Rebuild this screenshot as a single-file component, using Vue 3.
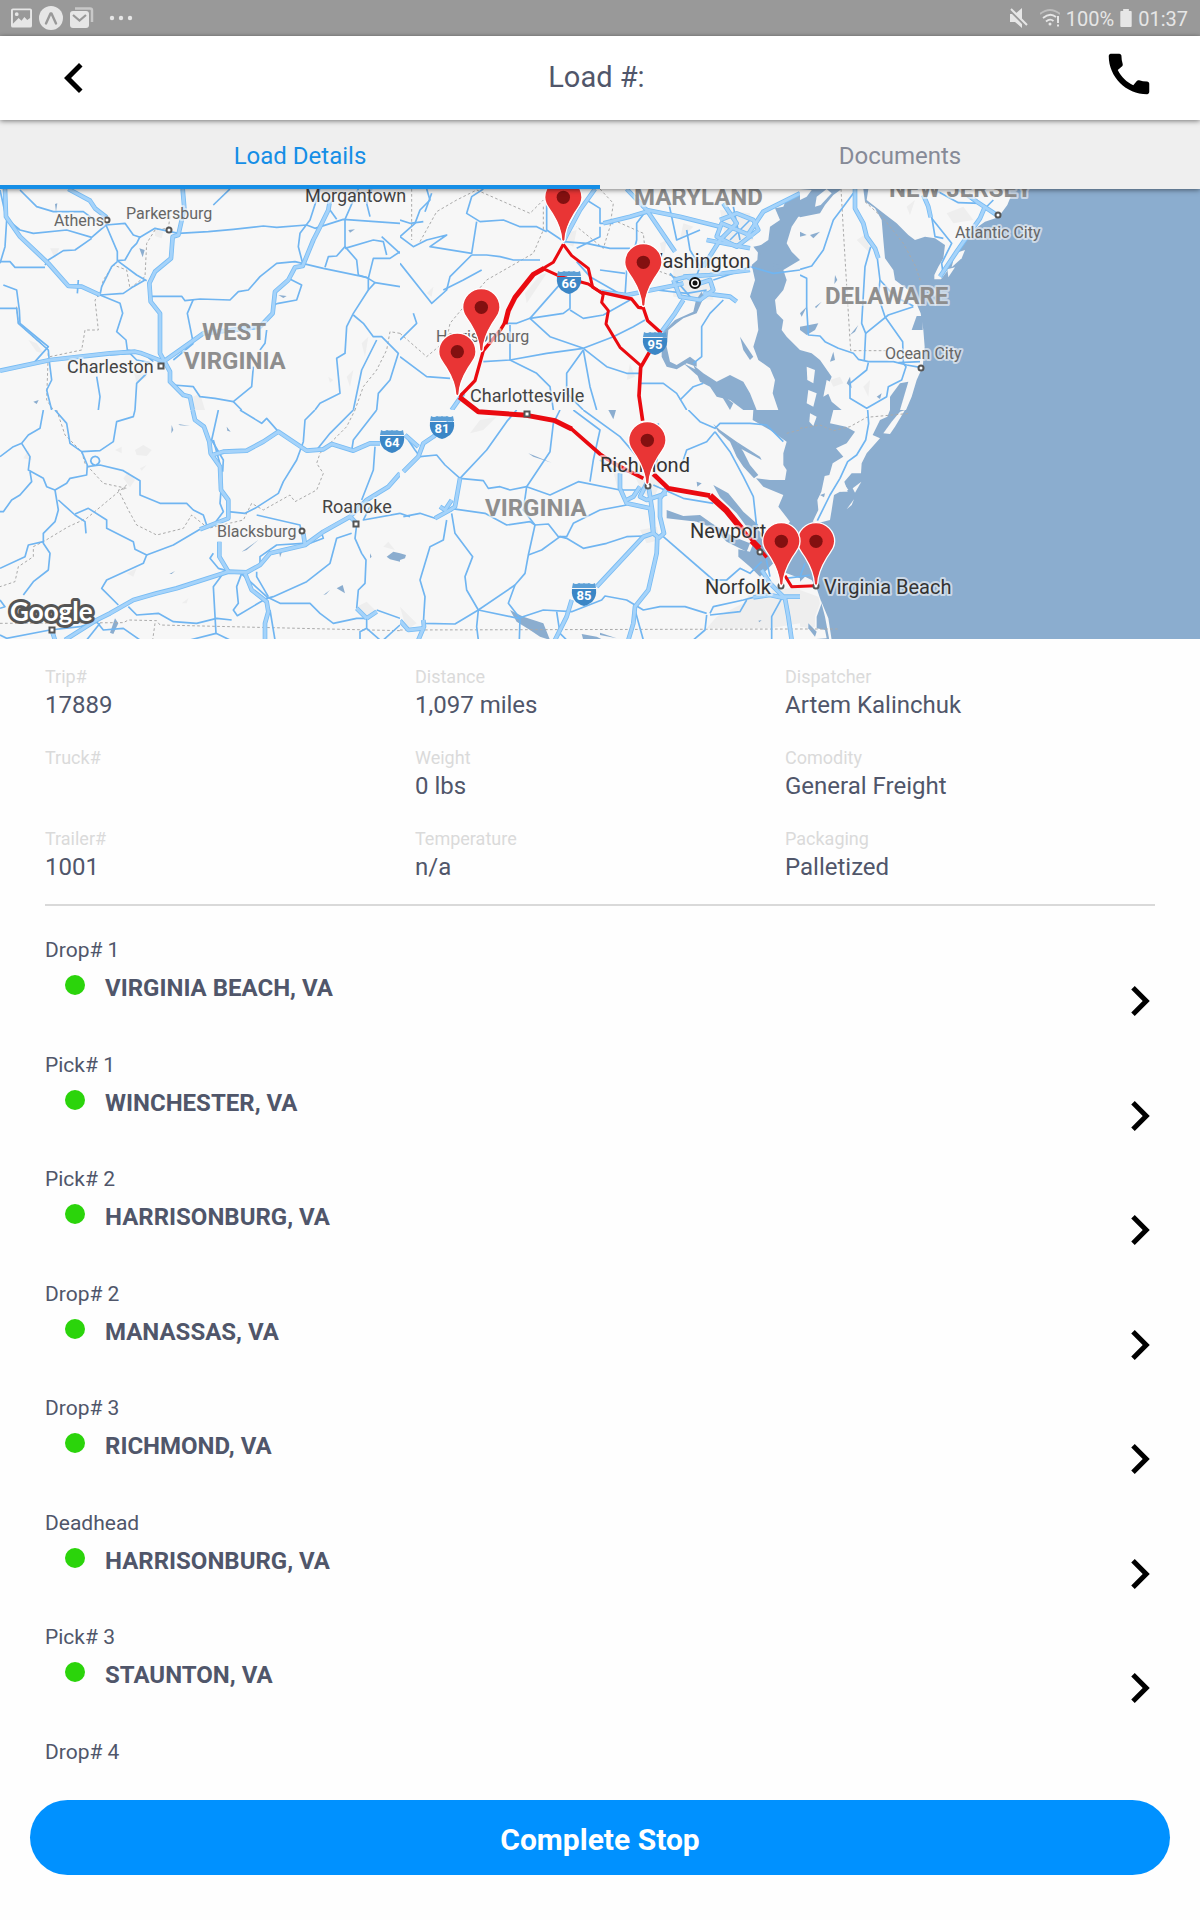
<script setup>
import { ref } from 'vue'

const tabs = ['Load Details', 'Documents']
const activeTab = ref('Load Details')

const details = [
  { label: 'Trip#', value: '17889' },
  { label: 'Distance', value: '1,097 miles' },
  { label: 'Dispatcher', value: 'Artem Kalinchuk' },
  { label: 'Truck#', value: '' },
  { label: 'Weight', value: '0 lbs' },
  { label: 'Comodity', value: 'General Freight' },
  { label: 'Trailer#', value: '1001' },
  { label: 'Temperature', value: 'n/a' },
  { label: 'Packaging', value: 'Palletized' },
]

const stops = [
  { label: 'Drop# 1', city: 'VIRGINIA BEACH, VA' },
  { label: 'Pick# 1', city: 'WINCHESTER, VA' },
  { label: 'Pick# 2', city: 'HARRISONBURG, VA' },
  { label: 'Drop# 2', city: 'MANASSAS, VA' },
  { label: 'Drop# 3', city: 'RICHMOND, VA' },
  { label: 'Deadhead', city: 'HARRISONBURG, VA' },
  { label: 'Pick# 3', city: 'STAUNTON, VA' },
  { label: 'Drop# 4', city: '' },
]

// Map tiles: each one holds its shapes in its own coordinates.
const tiles = [
  {
    x: 0, y: -27, sea: false,
    land: [],
    urban: ['465,150 490,155 485,175 465,168', '85,480 110,490 130,520 110,515', '400,570 430,560 440,590 410,610', '580,650 600,640 615,690 580,690', '1085,490 1105,470 1095,530', '150,205 178,205 165,235', '1040,590 1060,570 1050,620', '985,590 1000,600 990,608'],
    water: ['418,205 434,210 428,232', '835,345 860,348 850,354', '1045,150 1065,148 1050,158', '100,665 116,660 110,672', '165,72 172,70 168,95'],
    major: [
      'M15,27 L18,110 60,170 145,250 205,318 245,320 300,345',
      'M205,27 L270,62 285,85 320,112',
      'M548,27 L553,85 535,165 518,170 513,235 465,275 448,310 452,365 480,400 480,520 510,575 510,605 550,645 570,650 578,690',
      'M990,60 L985,90 958,145 940,180 908,258 885,262 865,300 825,335 818,400 780,440 610,460 540,510 490,545 425,520 405,515 330,520 150,540 0,572',
    ],
    minor: [
      'M0,30 L20,120 15,200 0,250', 'M18,115 L60,150 100,160 200,150 275,172 318,135 375,130 400,165 420,172 465,145 535,160 625,155 700,148 790,138 830,142 920,135 945,145 1030,118 1200,130',
      'M135,262 L45,262 30,245 0,245', 'M135,255 L145,240 190,212 225,210 275,175', 'M318,135 L352,215 352,242 410,285 440,302', 'M352,242 L375,240 395,205 410,190 420,170',
      'M352,245 L335,260 305,320 300,345 370,340 400,320 435,300', 'M300,345 L360,370 368,400 350,455 378,480 382,510 430,520 460,545',
      'M455,349 L545,349 555,362 600,357 690,360 715,335 745,330 780,290 830,250 885,245 970,265 1100,292 1125,308 1200,320',
      'M580,358 L562,400 570,440 580,490', 'M0,385 L50,385 55,430 100,470 145,510 148,545 155,600 140,630 155,690', 'M10,315 L50,330 58,390 60,430 120,480 145,500 105,545',
      'M60,30 L110,80 160,95 250,95 290,125', 'M690,27 L640,75', 'M960,27 L930,120 900,160 895,200 910,258', 'M990,90 L1010,118', 'M1075,27 L1035,118 1035,200 1070,240 1075,285 1105,295',
      'M1035,200 L1010,228 985,230 975,262', 'M1035,205 L1120,180 1150,185 1160,225', 'M1200,215 L1170,235 1120,235 1105,295 1105,330 1060,400 1040,440 1035,520 1010,535 1020,640 960,670 945,690', 'M1060,405 L1090,430 1120,470 1145,470 1195,520 1170,600 1135,640 1130,690', 'M865,295 L905,315 890,360 835,370 820,375', 'M800,450 L795,490 780,510', 'M760,560 L755,620 700,665 645,655 600,650 580,620 520,615', 'M700,665 L725,690', 'M290,590 L300,650 295,690', 'M440,580 L410,610 405,690', 'M450,548 L410,540 390,520 330,525',
      'M1115,27 L1100,70 1110,110', 'M1200,220 L1145,170', 'M1105,330 L1125,308', 'M235,300 L232,340', 'M520,540 L580,490', 'M1130,480 L1085,570 1060,690',
    ],
    border: ['M690,27 L640,75', 'M510,110 L505,145 465,150 440,190 435,290 390,325 380,270 340,255 310,300 300,340 285,360 295,450 255,450 245,510 150,530', 'M1200,460 L1170,455 1160,510 1130,570 1090,620 1065,690', 'M50,380 L55,430 110,480 145,510 140,660 160,690'],
  },
  {
    x: 1200, y: -27, sea: false,
    land: [],
    urban: ['500,160 530,150 520,200 495,190', '960,90 1050,100 1060,180 980,200', '820,260 940,260 940,360 820,350', '850,130 880,140 840,180', '780,190 800,180 790,240', '420,285 440,280 380,370 375,340', '690,550 705,590 680,600', '80,340 100,320 95,350'],
    water: [
      '1200,45 1160,55 1150,80 1125,85 1140,120 1110,140 1105,180 1075,200 1072,240 1055,255 1065,300 1050,350 1070,390 1075,450 1060,500 1075,540 1110,565 1125,600 1118,640 1135,690 1200,690 1200,510 1160,470 1145,450 1150,420 1130,400 1125,360 1150,330 1160,300 1150,270 1200,240 1175,215 1160,190 1175,140 1195,110 1200,110',
      '905,335 912,350 890,400 850,415 830,430 805,450 800,500 810,545 830,555 870,530 890,545 890,560 860,550 830,568 800,560 785,530 785,500 790,455 825,420 880,395 888,360',
      '880,555 910,580 950,605 990,585 1030,605 1050,640 1070,690 1030,690 990,660 950,650 930,620 900,605', '850,550 890,570 920,600 890,585', '1020,470 1040,500 1060,530 1050,540 1030,510', '960,640 1000,670 990,690', '1060,200 1110,190 1080,225', '1120,250 1155,260 1120,270',
    ],
    major: [
      'M585,27 L540,90 500,165 490,185', 'M680,27 L740,90 825,215', 'M740,95 L690,110 610,130', 'M600,335 L680,345 830,315 850,310', 'M820,300 L860,290 900,310 930,300 940,330 900,360 840,350 820,300', 'M785,455 L825,400 850,360', 'M740,90 L840,110 960,140', 'M960,120 L1010,100 1060,120 1075,150 1010,200 950,170 965,130 1060,170', 'M1200,40 L1090,95 1040,170', 'M910,260 L960,180 1010,130 970,70', 'M920,180 L1050,205', 'M155,690 L190,640', 'M910,340 L990,350 1010,365', 'M850,290 L930,285 1050,270',
    ],
    minor: [
      'M80,27 L90,60 60,90 45,130 0,170', 'M95,40 L75,95', 'M250,27 L215,50 200,100 240,125 310,120 360,140 410,140 440,155', 'M0,120 L30,130 70,125', 'M230,125 L215,220 90,200 140,165 80,180 40,200 0,170', 'M215,225 L260,225 300,230 340,240 420,240', 'M215,225 L150,290 140,330 95,370 0,250',
      'M440,40 L440,150 485,180', 'M490,185 L560,190 630,205 690,205', 'M600,140 L600,170 530,205', 'M640,130 L600,130 600,85 560,60', 'M740,90 L710,130 710,180 690,260', 'M680,270 L675,350 570,290 530,245', 'M600,270 L675,280',
      'M510,340 L510,385 490,400 390,415 350,430 310,430', 'M390,415 L500,290', 'M510,390 L550,415 610,405 690,360', 'M390,415 L450,470 550,505 640,470 700,440 735,420', 'M550,505 L440,520 330,540 250,545', 'M550,510 L500,580 500,640 550,690', 'M550,510 L570,620 590,690', 'M550,505 L620,560 680,580 720,580', 'M330,435 L330,540 410,580 450,620 460,690',
      'M720,610 L790,610 830,640 860,690', 'M840,660 L880,620 910,610', 'M970,360 L930,400 905,440 905,530 880,550', 'M1200,270 L1120,280 1050,260 1000,280 940,300', 'M40,400 L50,430 0,480', 'M0,530 L80,590 150,595', 'M860,150 L870,210 900,260 885,300', 'M800,40 L830,180 900,150', 'M1000,80 L1020,180', 'M1050,120 L990,180', 'M245,270 L190,300 130,330', 'M770,330 L860,340 920,330', 'M810,280 L870,350',
    ],
    border: ['M35,27 L35,180', 'M60,185 L110,95 170,60 230,30 390,100 430,60', 'M430,80 L430,150 400,220 330,260 260,300 200,370 150,430 140,480 80,530 0,460', 'M600,27 L640,70 630,140 610,205 530,140', 'M640,120 L730,160 740,260 850,300'],
  },
  {
    x: 2400, y: -27, sea: true,
    land: [
      '0,112 60,100 75,75 100,45 125,27 190,27 195,65 225,85 245,120 250,180 255,235 280,270 285,300 325,330 330,350 350,372 362,400 370,450 374,500 368,560 350,600 335,650 318,690 125,690 95,665 80,630 95,590 60,540 35,520 0,510',
      '205,27 200,60 245,95 290,130 325,165 345,180 375,170 405,175 435,195 430,235 415,260 403,285 403,298 423,298 440,275 455,240 490,190 520,150 555,125 595,112 622,75 632,50 612,27',
      '0,27 35,30 20,50 0,60', '80,27 50,50 45,80 62,75 95,40', '465,220 495,210 485,235 455,262', '442,268 465,262 445,292', '25,630 50,640 40,680 20,670', '20,560 45,570 40,610 22,600', '80,600 120,620 70,650',
    ],
    urban: ['440,100 490,80 520,120 460,130', '170,180 200,160 210,220', '320,80 345,60 330,105', '190,620 210,600 205,650', '90,600 120,590 130,610 100,620'],
    water: ['350,408 368,408 368,450 335,450', '0,400 20,380 5,410', '0,440 55,430 45,450 20,465 0,450', '105,285 112,300 103,312', '45,380 65,365 48,385', '150,465 175,435 165,455', '100,515 105,540 90,545', '150,590 155,625 140,610', '270,650 300,610 325,605 300,690 270,690', '230,650 245,640 240,657', '0,155 20,165 0,170', '30,165 60,155 40,175'],
    major: ['M165,27 L165,85 190,130 200,170 225,205 235,235', 'M370,45 L385,80 392,112', 'M595,108 L530,65 505,45', 'M420,290 L470,215 540,115 555,80'],
    minor: ['M160,40 L130,80 100,120 70,210 35,258 0,268', 'M0,285 L20,295 20,380 25,465 60,468 75,485 115,505 160,520 175,538 205,545 280,545 320,555 360,562', 'M212,200 L195,260 185,430 197,460 193,540', 'M232,235 L240,300 235,350 255,410 308,485 310,550 318,560 305,600 265,620 260,650 200,685 150,655 150,610 200,570 205,548', 'M197,460 L265,405 340,380', 'M240,300 L285,350 340,378', 'M295,548 L360,545', 'M415,35 L475,68 540,70 580,95', 'M395,110 L405,170 430,175', 'M395,115 L455,190 425,250 430,285', 'M550,90 L580,60', 'M470,27 L530,70'],
    border: ['M123,27 L130,150 145,400 152,512 260,512', 'M195,65 L250,115 310,190 345,255 362,305'],
  },
  {
    x: 0, y: 663, sea: false,
    land: [],
    urban: ['405,120 430,105 455,120 440,138 410,135', '370,205 385,185 405,210 390,232', '345,120 365,110 365,130', '1070,590 1100,575 1125,600 1095,625', '1150,410 1165,395 1185,420', '380,490 410,475 400,500', '545,580 565,565 560,580', '420,175 440,165 425,182', '70,145 85,120 95,150'],
    water: ['535,42 570,48 540,46', '515,45 520,60 514,70', '680,50 692,65 682,62', '725,425 775,390 740,420', '1160,440 1180,425 1200,430 1200,455 1170,448', '1110,430 1115,440 1110,445', '970,555 990,540 978,553', '1010,535 1028,525 1035,550', '508,492 525,483 515,492', '838,428 846,426 840,442', '345,625 355,640 340,672 330,668'],
    major: [
      'M578,0 L585,30 612,50 628,95 632,130 660,170 663,240 685,270 685,325 600,358', 'M638,135 L670,125 740,122 790,95 835,65 920,122 970,118 995,102 1060,122 1110,100 1140,100', 'M1200,190 L1165,230 1100,270 1050,320 970,365 915,405 810,430 780,465 740,487 685,485 530,535 470,550 400,570 330,610 290,630 195,690', 'M658,395 L658,440 685,485', 'M735,490 L755,540 800,575 805,605 795,640 795,690', 'M155,660 L165,690', 'M910,370 L915,405', 'M1050,320 L1070,340', 'M1100,625 L1070,595 M1100,625 L1130,605',
    ],
    minor: [
      'M130,0 L120,55 85,75 65,100 40,110 0,140', 'M65,100 L90,140 85,180 130,205 140,230 165,240 200,220 210,205 260,195 262,165 245,125 210,100 200,40 165,0', 'M245,125 L300,122 340,95 350,35 400,20 405,0', 'M262,170 L300,165 370,182 420,212 420,255 480,280 560,280 580,300 610,315 620,345', 'M90,185 L95,215 60,255 35,270 10,305 0,305', 'M165,240 L175,300 165,335 130,370 130,400 150,430 145,480 100,515 70,555', 'M175,270 L225,315 255,335 258,370', 'M225,312 L265,295 320,330 320,355 400,395 405,418 440,435 430,460 320,510 305,535 355,585', 'M130,395 L85,405 75,440 0,475', 'M440,435 L520,405 600,358', 'M655,0 L635,90 670,150 668,185', 'M640,90 L665,180 663,240 660,280 670,305 640,345', 'M720,0 L785,40 800,25 835,65', 'M945,0 L915,30 910,95 890,150 850,215 835,250 765,295 735,310 685,305', 'M1130,0 L1060,90 1055,122', 'M770,315 L900,345 905,370', 'M1125,110 L1120,180 1085,270', 'M640,430 L630,445 655,475 680,482', 'M670,490 L640,530 648,670 690,690 M648,670 L570,690', 'M725,490 L710,530 715,580 700,600 712,617 800,565 820,560 920,515 990,460 1010,385 1055,370', 'M720,487 L800,560 840,580 930,580 960,610 1000,640 1070,625 1098,625', 'M385,590 L410,615 475,610 520,635 590,640 650,625 695,630', 'M770,485 L770,500 805,560', 'M780,465 L780,440 830,405 910,400', 'M930,400 L970,385 965,370', 'M1070,345 L1065,385 1085,430 1098,450 1095,520 1075,540 1070,595', 'M1100,625 L1100,655 1140,690 M1100,655 L1080,665 1080,690', 'M290,635 L310,660 370,655 420,690', 'M0,570 L15,590 0,595', 'M0,675 L20,685 150,660 240,650 300,630', 'M810,600 L825,690', 'M1130,600 L1200,625', 'M1110,290 L1090,330 1200,310', 'M285,165 A13,13 0 1 1 286,165', 'M300,640 L260,690', 'M1060,0 L990,70 950,120', 'M1200,645 L1150,690',
    ],
    border: ['M170,0 L195,75 245,125 255,160 310,220 380,235 355,240 385,300 410,345 470,375 550,355 575,315 625,355 730,330 755,280 790,300 870,255 885,275 950,240 970,190 950,160 960,130 1040,50 1065,0', 'M380,225 L260,325 205,350 130,395 100,410 100,440 55,470 45,515 0,530', 'M0,640 L370,638 385,630 470,632 480,645 900,655 1200,662', 'M465,640 L458,690'],
  },
  {
    x: 1200, y: 663, sea: false,
    land: [],
    urban: ['1200,530 1200,640 1110,655 920,655 950,620 1030,580 1050,550', '705,200 740,180 780,220 760,270 730,250', '720,360 770,350 780,390 740,400', '0,590 30,620 50,640 20,660', '210,70 240,30 290,20 250,60', '640,185 665,190 655,245'],
    water: [
      '1060,0 1200,0 1200,505 1160,490 1120,460 1080,500 1050,470 1015,440 1015,418 1050,425 1060,400 1045,365 1060,345 1100,385 1150,360 1170,335 1135,290 1150,255 1090,230 1068,205 1110,210 1155,210 1160,180 1150,165 1150,130 1160,95 1110,60 1058,30',
      '940,225 985,250 1030,305 1075,345 1070,370 1040,350 1010,310 960,262', '940,42 960,60 1010,95 1030,125 1050,165 1075,195 1062,205 1030,170 1010,140 990,95 955,65', '1010,95 1080,140 1085,150 1020,115', '800,300 850,318 900,315 935,340 1000,380 1050,400 1040,425 980,395 940,355 890,335 800,325', '625,0 648,0 640,28', '330,600 370,620 430,640 450,690 420,680 390,660 350,635', '545,672 590,680 610,690 550,690', '385,130 455,158 400,140', '0,430 18,435 15,445 0,450', '890,215 905,220 892,230', '1075,632 1085,630 1078,637', '600,668 650,685 600,675',
    ],
    major: ['M155,30 L100,80 70,100 55,140 10,185', 'M15,75 L55,110', 'M180,205 L165,290 150,300 105,325', 'M120,290 L135,300 155,270', 'M55,690 L72,650 70,630', 'M0,632 L25,660 70,655', 'M740,220 L720,260 740,270 800,250', 'M660,190 L660,235 680,280 750,295 760,370 730,380 590,530', 'M745,225 L758,310 760,370 772,380 770,430 745,540 705,590 700,640 685,690', 'M515,570 L500,620 465,690', 'M800,235 L780,265 780,320 792,370 775,385', 'M680,270 L700,260 720,230', 'M1060,562 L1110,555 1155,565 1165,620 1175,690', 'M1085,480 L1110,520 1150,560 1200,560'],
    minor: ['M180,205 L250,212 265,235 300,230 330,240 380,230 450,255 535,215 660,240 720,240', 'M10,320 L60,310 105,325 150,295 255,310 320,345 390,335 405,345 445,342 475,380 500,380 520,340 600,300 680,285', 'M60,140 L110,135 135,165 180,205 260,120 320,35 350,0', 'M380,230 L450,125 460,40 480,0', 'M380,230 L370,300 405,345 385,435 375,490 345,525 325,580 360,625 358,690', 'M385,435 L425,420 480,380 500,385 550,415 620,400 680,380 730,378', 'M140,330 L130,390 90,410 60,510 75,560 70,640 165,642 235,600', 'M155,310 L165,370 218,440 195,500 200,540 235,600 230,650 235,690', 'M235,600 L345,525', 'M235,600 L355,625 430,600 515,605 605,570 615,558 680,570 730,600 780,590 855,590 920,610', 'M790,380 L940,510', 'M520,0 L600,60 580,150 570,215', 'M550,0 L660,80 720,150', 'M775,40 L770,170', 'M845,165 L860,120 920,95 945,65', 'M865,0 L900,35 945,55 960,40 1050,40 1100,45 1150,95', 'M945,65 L990,125 1030,200 1060,260 1070,350', 'M760,225 L850,265 940,280', 'M930,610 L940,590 1030,570 1060,562', 'M920,615 L915,660 880,690', 'M940,510 L980,510 1020,475 1050,490 1085,455', 'M1040,570 L1020,605 930,615', 'M1145,565 L1115,620 1115,690', 'M470,605 L480,670 500,690', 'M705,600 L730,690', 'M0,310 L30,320', 'M1095,430 L1110,500', 'M25,90 L45,120 60,140', 'M1155,505 L1200,500', 'M600,150 L640,180 720,190'],
    border: ['M0,660 L1200,657', 'M1160,70 L1200,60'],
  },
  {
    x: 2400, y: 663, sea: true,
    land: [
      '100,0 90,40 138,50 165,65 140,100 108,115 130,140 98,160 88,195 74,198 64,245 52,270 55,300 38,335 58,338 90,330 95,300 102,255 120,245 143,245 133,215 155,190 183,190 185,160 200,130 240,85 218,75 240,30 262,20 270,0',
      '250,70 275,35 300,5 315,0 285,50 270,72', '30,10 50,20 40,48 28,35', '158,235 184,215 165,248', '140,298 162,268 155,285', '120,245 135,225 145,240',
      '0,515 15,500 35,510 50,535 60,565 65,580 50,620 50,655 75,660 80,685 0,690', '62,570 85,625 95,690 88,690 75,620',
    ],
    urban: ['0,540 55,560 60,580 45,620 45,650 30,655 0,650'],
    water: ['60,255 75,250 72,262', '25,640 50,665 45,680 25,655'],
    major: [],
    minor: ['M203,0 L206,40 197,90 170,135 143,155 120,205 90,255 52,332', 'M0,500 L15,460', 'M0,500 L30,495'],
    border: ['M0,657 L115,657', 'M0,55 L60,45 100,62 150,50 200,22 330,10'],
  },
]

const routes = [
  { w: 9, d: 'M1690,166 L1660,220 1635,235 1628,238' },
  { w: 15, d: 'M1632,238 L1600,256 1545,325 1525,365 1515,405' },
  { w: 10, d: 'M1515,400 L1500,425 1450,485 1425,575 1378,624' },
  { w: 9, d: 'M1690,166 L1715,200 1765,238 1778,295 1810,315' },
  { w: 9, d: 'M1628,238 L1680,262 1765,285 1810,315 1805,340 1825,365 1818,405 1860,475 1925,532' },
  { w: 10, d: 'M1805,310 L1895,330 1915,355 1930,357 1943,395 1984,432' },
  { w: 11, d: 'M1948,490 L1922,535 1917,620 1928,695' },
  { w: 15, d: 'M1378,624 L1435,668 1580,679 1665,695 1715,720' },
  { w: 11, d: 'M1710,716 L1800,795 1845,825 1930,868' },
  { w: 14, d: 'M1960,855 L2005,898 2130,920' },
  { w: 19, d: 'M2130,920 L2180,965 2225,1020' },
  { w: 10, d: 'M2225,1018 L2270,1070 2300,1105' },
  { w: 18, d: 'M2255,1055 L2278,1078' },
  { w: 9, d: 'M2355,1160 L2375,1193 2446,1190' },
]

const pins = [
  [1690, 25], [1930, 220], [1444, 355], [1372, 488], [1942, 754], [2448, 1057], [2344, 1057],
]

const shields = [
  { n: '66', x: 569, y: 93 },
  { n: '95', x: 655, y: 154 },
  { n: '81', x: 442, y: 238 },
  { n: '85', x: 584, y: 405 },
  { n: '64', x: 392, y: 252 },
]

const places = [
  { t: 'Morgantown', x: 305, y: 13, c: 'town' },
  { t: 'Athens', x: 54, y: 37, c: 'small' },
  { t: 'Parkersburg', x: 126, y: 30, c: 'small' },
  { t: 'Charleston', x: 67, y: 184, c: 'town' },
  { t: 'WEST', x: 202, y: 151, c: 'state' },
  { t: 'VIRGINIA', x: 184, y: 180, c: 'state' },
  { t: 'MARYLAND', x: 634, y: 16, c: 'state' },
  { t: 'NEW JERSEY', x: 889, y: 8, c: 'state' },
  { t: 'DELAWARE', x: 825, y: 115, c: 'state' },
  { t: 'Atlantic City', x: 955, y: 49, c: 'small' },
  { t: 'Ocean City', x: 885, y: 170, c: 'small' },
  { t: 'Washington', x: 645, y: 79, c: 'city' },
  { t: 'Harrisonburg', x: 436, y: 153, c: 'small' },
  { t: 'Charlottesville', x: 470, y: 213, c: 'town' },
  { t: 'Roanoke', x: 322, y: 324, c: 'town' },
  { t: 'Blacksburg', x: 217, y: 348, c: 'small' },
  { t: 'VIRGINIA', x: 485, y: 327, c: 'state' },
  { t: 'Richmond', x: 600, y: 283, c: 'city' },
  { t: 'Newport', x: 690, y: 349, c: 'city' },
  { t: 'Norfolk', x: 705, y: 405, c: 'city' },
  { t: 'Virginia Beach', x: 824, y: 405, c: 'city' },
]

const circles = [[107, 31], [169, 41], [302, 342], [998, 26], [921, 179], [648, 297], [781, 397], [760, 363], [816, 397]]
const squares = [[161, 177], [356, 335], [527, 225], [52, 441]]
</script>

<template>
  <div class="screen">
    <div class="status">
      <div class="status-group">
        <svg width="21" height="20" viewBox="0 0 22 20" aria-hidden="true">
          <path fill-rule="evenodd" fill="#e6e6e6" d="M2,0H20Q22,0 22,2V18Q22,20 20,20H2Q0,20 0,18V2Q0,0 2,0ZM2,2V16L8,10 11,13 14,9 17,12 20,10V2ZM6,4A2,2 0 1 1 6,8A2,2 0 1 1 6,4Z" />
        </svg>
        <svg width="24" height="24" viewBox="0 0 24 24" aria-hidden="true">
          <circle cx="12" cy="12" r="12" fill="#e6e6e6" />
          <path d="M7,17.500L11.500,7.500H12.500L17,17.500" fill="none" stroke="#999" stroke-width="2.400" stroke-linejoin="round" stroke-linecap="round" />
        </svg>
        <svg width="24" height="22" viewBox="0 0 24 22" aria-hidden="true">
          <path d="M5,1.500H20Q22,1.500 22,3.500V15" fill="none" stroke="#c8c8c8" stroke-width="2.500" />
          <rect x="0" y="4" width="19" height="17" rx="3" fill="#e6e6e6" />
          <path d="M3,8L9.500,13.500 16,8" fill="none" stroke="#999" stroke-width="2.200" />
        </svg>
        <svg class="dots" width="24" height="6" viewBox="0 0 24 6" aria-hidden="true" fill="#e6e6e6">
          <circle cx="3" cy="3" r="2.200" /><circle cx="12" cy="3" r="2.200" /><circle cx="21" cy="3" r="2.200" />
        </svg>
      </div>
      <div class="status-group right">
        <svg width="18" height="20" viewBox="0 0 18 20" aria-hidden="true">
          <path d="M0,6H5L12,0V20L5,14H0Z" fill="#e6e6e6" />
          <path d="M0,2L16,18" stroke="#999" stroke-width="3" /><path d="M1,1L17,17" stroke="#e6e6e6" stroke-width="2" />
        </svg>
        <svg class="wifi" width="20" height="18" viewBox="0 0 20 18" aria-hidden="true" fill="none" stroke-width="1.800">
          <path d="M0,5Q10,-3 20,5" stroke="#bdbdbd" />
          <path d="M3,9Q10,3 16,8M6,12.500Q10,9 13.500,12" stroke="#e6e6e6" />
          <circle cx="10" cy="15" r="1.500" fill="#e6e6e6" /><path d="M18,7V14M18,15.500V17.500" stroke="#e6e6e6" stroke-width="2" />
        </svg>
        <span class="status-text">100%</span>
        <svg width="12" height="18" viewBox="0 0 12 19" aria-hidden="true">
          <path d="M3,0H9V2H11Q12,2 12,3V18Q12,19 11,19H1Q0,19 0,18V3Q0,2 1,2H3Z" fill="#e6e6e6" />
        </svg>
        <span class="status-text">01:37</span>
      </div>
    </div>

    <header class="header">
      <button class="icon-button" type="button" aria-label="Back">
        <svg width="60" height="60" viewBox="0 0 24 24"><path d="M15.410 7.410L14 6l-6 6 6 6 1.410-1.410L10.830 12z" /></svg>
      </button>
      <h1 class="title">{{ 'Load #: ' }}</h1>
      <button class="icon-button call" type="button" aria-label="Call">
        <svg width="54" height="54" viewBox="0 0 24 24"><path d="M20.010 15.380c-1.230 0-2.420-.2-3.530-.56-.35-.12-.74-.03-1.010.24l-1.570 1.970c-2.830-1.350-5.480-3.900-6.890-6.830l1.950-1.660c.27-.28.35-.67.24-1.020-.37-1.110-.56-2.300-.56-3.530 0-.54-.45-.99-.99-.99H4.190C3.650 3 3 3.240 3 3.990 3 13.280 10.730 21 20.010 21c.71 0 .99-.63.99-1.180v-3.450c0-.54-.45-.99-.99-.99z" /></svg>
      </button>
    </header>

    <nav class="tabs">
      <button
        v-for="tab in tabs"
        :key="tab"
        type="button"
        class="tab"
        :class="{ active: tab === activeTab }"
        @click="activeTab = tab"
      >{{ tab }}</button>
    </nav>

    <svg class="map" viewBox="0 0 1200 450" preserveAspectRatio="xMidYMid slice" role="img" aria-label="Route map">
      <defs>
        <clipPath id="tile-clip"><rect x="0" y="0" width="1200" height="690" /></clipPath>
      </defs>
      <svg width="1200" height="450" viewBox="0 0 3600 1350">
        <g v-for="tile in tiles" :key="`${tile.x}-${tile.y}`" :transform="`translate(${tile.x} ${tile.y})`" clip-path="url(#tile-clip)">
          <rect width="1200" height="690" :class="tile.sea ? 'sea' : 'land'" />
          <polygon v-for="p in tile.land" :key="p" :points="p" class="land" />
          <polygon v-for="p in tile.urban" :key="p" :points="p" class="urban" />
          <polygon v-for="p in tile.water" :key="p" :points="p" class="sea" />
          <path v-for="p in tile.border" :key="p" :d="p" class="border" />
          <path v-for="p in tile.minor" :key="p" :d="p" class="minor" />
          <path v-for="p in tile.major" :key="`c${p}`" :d="p" class="casing" />
          <path v-for="p in tile.major" :key="p" :d="p" class="major" />
        </g>
        <path v-for="r in routes" :key="r.d" :d="r.d" class="route" :stroke-width="r.w" />
      </svg>

      <circle v-for="c in circles" :key="`${c}`" :cx="c[0]" :cy="c[1]" r="2.500" class="marker" />
      <rect v-for="s in squares" :key="`${s}`" :x="s[0] - 2.5" :y="s[1] - 2.5" width="5" height="5" class="marker" />
      <circle cx="695" cy="94" r="5" fill="#fff" stroke="#111" stroke-width="2" />
      <circle cx="695" cy="94" r="2.500" fill="#111" />

      <g v-for="s in shields" :key="s.n" :transform="`translate(${s.x} ${s.y})`">
        <path d="M-11,-11Q-8,-9 -5,-11Q-2,-10 0,-11Q2,-10 5,-11Q8,-9 11,-11L12,-6H-12Z" fill="#5b9fd6" />
        <path d="M-12,-5H12Q13,3 8,8Q4,11 0,12Q-4,11 -8,8Q-13,3 -12,-5Z" fill="#3b86c6" />
        <text class="shield-number" x="0" y="6">{{ s.n }}</text>
      </g>

      <text v-for="p in places" :key="`${p.t}${p.x}`" :x="p.x" :y="p.y" :class="['place', p.c]">{{ p.t }}</text>

      <svg width="1200" height="450" viewBox="0 0 3600 1350">
        <g v-for="p in pins" :key="`${p}`" :transform="`translate(${p[0]} ${p[1]})`">
          <path class="pin" d="M-5,128C-6,98 -16,76 -32,50C-49,24 -56,16 -56,0A56,56 0 0 1 56,0C56,16 49,24 32,50C16,76 6,98 5,128Q0,137 -5,128Z" />
          <circle r="20" fill="#831010" />
        </g>
      </svg>
      <text class="brand" x="10" y="432">Google</text>
    </svg>

    <main class="content">
      <dl class="details">
        <div v-for="item in details" :key="item.label">
          <dt>{{ item.label }}</dt>
          <dd>{{ item.value }}</dd>
        </div>
      </dl>

      <ul class="stops">
        <li v-for="stop in stops" :key="stop.label" class="stop">
          <a v-if="stop.city" href="#" class="stop-link">
            <span class="stop-text">
              <span class="stop-label">{{ stop.label }}</span>
              <span class="stop-city"><i class="dot"></i>{{ stop.city }}</span>
            </span>
            <svg class="chevron" width="19" height="30" viewBox="8.590 6 7.410 12" aria-hidden="true"><path d="M10 6L8.590 7.410 13.170 12l-4.580 4.590L10 18l6-6z" /></svg>
          </a>
          <span v-else class="stop-label">{{ stop.label }}</span>
        </li>
      </ul>
    </main>

    <footer class="footer">
      <button class="complete" type="button">Complete Stop</button>
    </footer>
  </div>
</template>

<style>
body {
  margin: 0;
  background: #fefefe;
}
</style>

<style scoped>
.screen {
  display: flex;
  flex-direction: column;
  height: 100vh;
  overflow: hidden;
  font-family: Roboto, "Liberation Sans", sans-serif;
  color: #50566a;
}

.status {
  display: flex;
  flex: none;
  align-items: center;
  justify-content: space-between;
  height: 36px;
  padding: 0 12px 0 11px;
  background: #999;
  color: #e6e6e6;
}

.status-group {
  display: flex;
  align-items: center;
  gap: 7px;
}

.status-text {
  padding-top: 2px;
  font-size: 20px;
  line-height: 24px;
}

.dots { margin-left: 8px; }
.right { gap: 6px; }
.wifi { margin-left: 6px; }

.header {
  position: relative;
  z-index: 2;
  display: grid;
  flex: none;
  grid-template-columns: 1fr auto 1fr;
  align-items: center;
  height: 84px;
  padding: 0 44px 0 44px;
  background: #fff;
  box-shadow: 0 1px 5px rgba(0, 0, 0, 0.5);
}

.icon-button {
  display: flex;
  justify-self: start;
  padding: 0;
  border: 0;
  background: none;
}

.call {
  justify-self: end;
  margin-bottom: 8px;
}

.title {
  margin: 0;
  padding-bottom: 2px;
  font-size: 29px;
  font-weight: 400;
  line-height: 36px;
  white-space: pre;
}

.tabs {
  position: relative;
  z-index: 1;
  display: flex;
  flex: none;
  background: #efefef;
  box-shadow: 0 1px 5px rgba(0, 0, 0, 0.5);
}

.tab {
  flex: 1;
  height: 69px;
  padding: 6px 0 0;
  border: 0;
  border-bottom: 4px solid transparent;
  background: none;
  color: #868a97;
  font: 400 24px/28px Roboto, "Liberation Sans", sans-serif;
}

.tab.active {
  border-bottom-color: #158ee6;
  color: #158ee6;
}

.map {
  display: block;
  flex: none;
  width: 100%;
  height: 450px;
}

.land { fill: #f7f7f7; }
.urban { fill: #eee; }
.sea { fill: #8badcf; }

.border {
  fill: none;
  stroke: #aaa;
  stroke-width: 3;
  stroke-dasharray: 8 7;
}

.minor,
.casing,
.major {
  fill: none;
  stroke-linejoin: round;
}

.minor { stroke: #70b5f1; stroke-width: 5; }
.casing { stroke: #78bcf4; stroke-width: 14; }
.major { stroke: #a5d3fa; stroke-width: 9; }

.route {
  fill: none;
  stroke: #ea0a10;
  stroke-linejoin: round;
}

.marker {
  fill: #fff;
  stroke: #555;
  stroke-width: 2;
}

.place {
  paint-order: stroke;
  stroke: rgba(247, 247, 247, 0.6);
  stroke-width: 4px;
  stroke-linejoin: round;
}

.state { font-size: 24px; font-weight: 700; fill: #8e8e8e; }
.city { font-size: 20px; fill: #333; }
.town { font-size: 18px; fill: #444; }
.small { font-size: 16px; fill: #666; }

.shield-number {
  fill: #fff;
  font-size: 13px;
  font-weight: 700;
  text-anchor: middle;
}

.pin {
  fill: #e93535;
  stroke: #fff;
  stroke-width: 4;
}

.brand {
  fill: #fff;
  stroke: #555;
  stroke-width: 6px;
  stroke-linejoin: round;
  paint-order: stroke;
  font: 700 26px Lato, sans-serif;
}

.content {
  flex: 1;
  min-height: 0;
  padding: 25px 45px 0;
  overflow: hidden;
}

.details {
  display: grid;
  grid-template-columns: repeat(3, 1fr);
  row-gap: 26px;
  margin: 0;
  padding-bottom: 23px;
  border-bottom: 2px solid #d9d9d9;
}

.details dt {
  color: #dadada;
  font-size: 18px;
  line-height: 25px;
}

.details dd {
  min-height: 28px;
  margin: 2px 0 0;
  font-size: 24px;
  line-height: 28px;
}

.stops {
  margin: 0;
  padding: 32px 0 0;
  list-style: none;
}

.stop { height: 114px; }
.stop:nth-child(odd) { height: 115px; }

.stop-link {
  display: flex;
  align-items: flex-start;
  justify-content: space-between;
  padding-right: 5px;
  color: inherit;
  text-decoration: none;
}

.stop-label {
  display: block;
  font-size: 21px;
  line-height: 24px;
}

.stop-city {
  display: flex;
  align-items: flex-start;
  gap: 20px;
  margin-top: 12px;
  padding-left: 20px;
  font-size: 24px;
  font-weight: 700;
  line-height: 28px;
}

.dot {
  width: 20px;
  height: 20px;
  margin-top: 1px;
  border-radius: 50%;
  background: #2bd40b;
}

.chevron { margin-top: 48px; }

.footer {
  flex: none;
  padding: 30px 30px 45px;
}

.complete {
  width: 100%;
  height: 75px;
  padding: 4px 0 0;
  border: 0;
  border-radius: 38px;
  background: #0091ff;
  color: #fff;
  font: 700 30px/36px Roboto, "Liberation Sans", sans-serif;
}
</style>
